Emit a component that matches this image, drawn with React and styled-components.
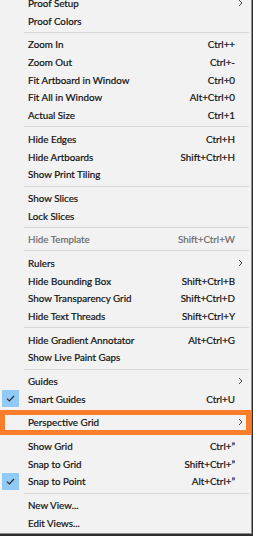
import React from "react";
import styled, { createGlobalStyle } from "styled-components";

const GlobalStyle = createGlobalStyle`
  html, body {
    margin: 0;
    padding: 0;
    background-color: #2e2e2e;
    overflow: hidden;
  }
`;

const Page = styled.div`
  width: 253px;
  height: 536px;
  overflow: hidden;
  background-color: #2e2e2e;
`;

const Menu = styled.div`
  width: 251px;
  margin-top: -6px;
  padding-bottom: 1px;
  background-color: #f2f2f2;
  border-right: 1px solid #8e8e8e;
  border-bottom: 1px solid #8e8e8e;
  font-family: Lato, "Liberation Sans", sans-serif;
  font-size: 9.8px;
  color: #000;
`;

const Row = styled.div`
  position: relative;
  height: 17.75px;
  display: grid;
  grid-template-columns: 28px 1fr auto 16px;
  align-items: center;
  color: ${(p) => (p.$disabled ? "#6d6d6d" : "#111")};
  -webkit-text-stroke: 0.2px ${(p) => (p.$disabled ? "#6d6d6d" : "#111")};

  ${(p) =>
    p.$marked &&
    `
    &::after {
      content: "";
      position: absolute;
      left: 0;
      right: 0;
      top: -3px;
      bottom: -4px;
      border: 5px solid #fd7e2a;
    }
  `}
`;

const CheckCell = styled.div`
  display: flex;
  align-items: center;
  height: 100%;
`;

const CheckBox = styled.div`
  margin-left: 2px;
  width: 17px;
  height: 17px;
  background-color: #91c9f7;
  display: flex;
  align-items: center;
  justify-content: center;
`;

const Label = styled.span`
  white-space: nowrap;
`;

const Shortcut = styled.span`
  white-space: nowrap;
  text-align: right;
`;

const ArrowCell = styled.div`
  display: flex;
  align-items: center;
  padding-left: 3px;
`;

const Separator = styled.div`
  height: 1px;
  margin: 2.4px 2px 2.45px 24px;
  background-color: #d7d7d7;
`;

const Check = () => (
  <svg width="9" height="7" viewBox="0 0 9 7">
    <path d="M1 3.6 L3.4 6 L8 1" fill="none" stroke="#2b2b2b" strokeWidth="1.2" />
  </svg>
);

const Chevron = () => (
  <svg width="5" height="8" viewBox="0 0 5 8">
    <path d="M1 1 L4 4 L1 7" fill="none" stroke="#444" strokeWidth="1" />
  </svg>
);

const groups = [
  [
    { label: "Proof Setup", sub: true },
    { label: "Proof Colors" },
  ],
  [
    { label: "Zoom In", key: "Ctrl++" },
    { label: "Zoom Out", key: "Ctrl+-" },
    { label: "Fit Artboard in Window", key: "Ctrl+0" },
    { label: "Fit All in Window", key: "Alt+Ctrl+0" },
    { label: "Actual Size", key: "Ctrl+1" },
  ],
  [
    { label: "Hide Edges", key: "Ctrl+H" },
    { label: "Hide Artboards", key: "Shift+Ctrl+H" },
    { label: "Show Print Tiling" },
  ],
  [{ label: "Show Slices" }, { label: "Lock Slices" }],
  [{ label: "Hide Template", key: "Shift+Ctrl+W", disabled: true }],
  [
    { label: "Rulers", sub: true },
    { label: "Hide Bounding Box", key: "Shift+Ctrl+B" },
    { label: "Show Transparency Grid", key: "Shift+Ctrl+D" },
    { label: "Hide Text Threads", key: "Shift+Ctrl+Y" },
  ],
  [
    { label: "Hide Gradient Annotator", key: "Alt+Ctrl+G" },
    { label: "Show Live Paint Gaps" },
  ],
  [
    { label: "Guides", sub: true },
    { label: "Smart Guides", key: "Ctrl+U", checked: true },
  ],
  [{ label: "Perspective Grid", sub: true, marked: true }],
  [
    { label: "Show Grid", key: "Ctrl+\u201D" },
    { label: "Snap to Grid", key: "Shift+Ctrl+\u201D" },
    { label: "Snap to Point", key: "Alt+Ctrl+\u201D", checked: true },
  ],
  [{ label: "New View..." }, { label: "Edit Views..." }],
];

const MenuItem = ({ item }) => (
  <Row $disabled={item.disabled} $marked={item.marked}>
    <CheckCell>
      {item.checked && (
        <CheckBox>
          <Check />
        </CheckBox>
      )}
    </CheckCell>
    <Label>{item.label}</Label>
    <Shortcut>{item.key}</Shortcut>
    <ArrowCell>{item.sub && <Chevron />}</ArrowCell>
  </Row>
);

const App = () => {
  return (
    <Page>
      <GlobalStyle />
      <Menu>
        {groups.map((group, gi) => (
          <React.Fragment key={gi}>
            {gi > 0 && <Separator />}
            {group.map((item) => (
              <MenuItem key={item.label} item={item} />
            ))}
          </React.Fragment>
        ))}
      </Menu>
    </Page>
  );
};

export default App;
